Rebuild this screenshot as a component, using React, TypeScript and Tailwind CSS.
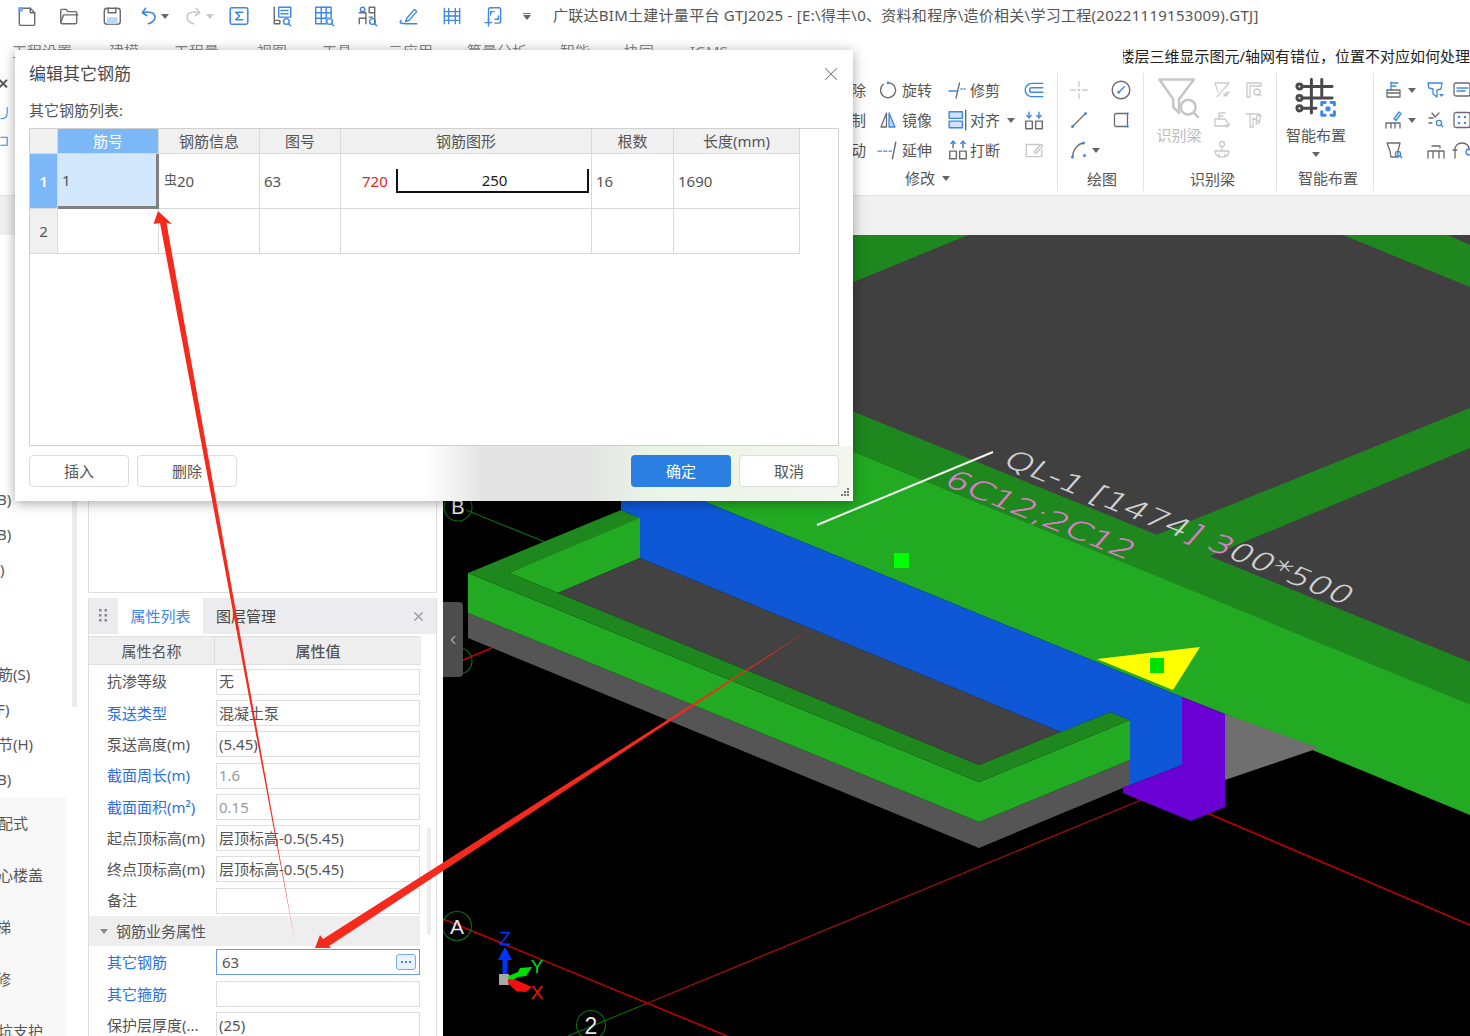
import type { ReactNode } from 'react';
import { ChevronLeft, X } from 'lucide-react';

const BLUE = '#3c87e8';
const GRAY = '#6b6b6b';
const DIM = '#c9c9c9';

const Ico = ({ size = 20, box = 20, children }: { size?: number; box?: number; children: ReactNode }) => (
  <svg width={size} height={size} viewBox={`0 0 ${box} ${box}`} fill="none" stroke={GRAY} strokeWidth={1.3} strokeLinecap="round" strokeLinejoin="round" className="shrink-0">
    {children}
  </svg>
);

const Caret = ({ color = '#666' }: { color?: string }) => (
  <svg width="8" height="5" viewBox="0 0 8 5" className="shrink-0"><path d="M0 0h8L4 5z" fill={color} /></svg>
);

const Mag = ({ x, y, c = BLUE }: { x: number; y: number; c?: string }) => (
  <g stroke={c}>
    <circle cx={x} cy={y} r="2.6" />
    <path d={`M${x + 2} ${y + 2}l1.8 1.8`} />
  </g>
);

/* quick access toolbar */
const topIcons = [
  { ml: 'ml-[16px]', el: <Ico size={22}><path d="M4 3h9l4 4v10.5a1 1 0 0 1-1 1H4a1 1 0 0 1-1-1V4" /><path d="M13 3v4h4" /><path d="M2 2h4v4H2z" fill="#6aa6ee" stroke="none" /></Ico> },
  { ml: 'ml-[20px]', el: <Ico size={22}><path d="M2.5 16V5a1 1 0 0 1 1-1h4l1.5 2h7a1 1 0 0 1 1 1v9a1 1 0 0 1-1 1h-12.500a1 1 0 0 1-1-1z" /><path d="M2.500 16l2.500-7h13" /></Ico> },
  { ml: 'ml-[21px]', el: <Ico size={22}><rect x="3" y="3" width="14.500" height="14.500" rx="2.500" /><path d="M6.500 3v4h7V3" /><path d="M5.500 11h9.500v6.500h-9.500z" fill="#b9d6f7" stroke="none" /></Ico> },
  { ml: 'ml-[16px]', el: <Ico size={22}><g stroke={BLUE} strokeWidth="1.500"><path d="M6 3L3 7l4 2.500" /><path d="M3.500 7c5-1.500 11-.5 11 4 0 3-3 5.500-6 6" /></g></Ico> },
  { ml: '', el: <Caret /> },
  { ml: 'ml-[12px]', el: <Ico size={22}><g stroke={DIM} strokeWidth="1.500"><path d="M14 3l3 4-4 2.500" /><path d="M16.500 7c-5-1.500-11-.5-11 4 0 3 3 5.500 6 6" /></g></Ico> },
  { ml: 'ml-[3px]', el: <Caret color={DIM} /> },
  { ml: 'ml-[14px]', el: <Ico size={22}><g stroke={BLUE} strokeWidth="1.400"><rect x="2" y="2.500" width="16" height="15" rx="1.500" /><path d="M13.500 6.500H7l3.500 3.500L7 13.500h6.500" /></g></Ico> },
  { ml: 'ml-[21px]', el: <Ico size={22}><path d="M3 2v15h5v-3H3" /><path d="M7 2h11v9H7z" stroke={BLUE} /><path d="M9 5h7M9 8h7" stroke={BLUE} strokeDasharray="1.500 1" /><Mag x={14} y={15} /></Ico> },
  { ml: 'ml-[20px]', el: <Ico size={22}><g stroke={BLUE}><rect x="2.500" y="2" width="14" height="15" /><path d="M7.500 2v15M12 2v15M2.500 7h14M2.500 12h14" /></g><circle cx="15" cy="15" r="3.500" fill="#fff" stroke="none" /><Mag x={15} y={15} /></Ico> },
  { ml: 'ml-[21px]', el: <Ico size={22}><g stroke={GRAY}><path d="M3 7h6v10M3 12h6M3 12v5" /><path d="M12 2h5v15M12 2v5h5M12 11h3" /></g><circle cx="6" cy="4" r="2" stroke={BLUE} /><Mag x={15} y={15} /></Ico> },
  { ml: 'ml-[20px]', el: <Ico size={22}><path d="M8 12l7-8 2 2-7 8-3 1z" stroke={BLUE} /><path d="M3 14c-3 3 1 3 5 3h9" stroke={BLUE} /></Ico> },
  { ml: 'ml-[21px]', el: <Ico size={22}><g stroke={BLUE}><path d="M3 3v14M17 3v14M7 3v14M13 3v14M3 6h14M3 10h14M3 14h14" strokeWidth="1.200" /></g></Ico> },
  { ml: 'ml-[20px]', el: <Ico size={22}><g stroke={BLUE}><path d="M5 15V4a1.500 1.500 0 0 1 1.500-1.500h8A1.500 1.500 0 0 1 16 4v11a1.500 1.500 0 0 1-1.500 1.500H11" /><path d="M7 6h3M7 6v3M14 13h-3M14 13v-3" /><path d="M5 13v6M2 16h6" /></g></Ico> },
];

const menus = ['工程设置', '建模', '工程量', '视图', '工具', '云应用', '算量分析', '智能', '协同', 'IGMS'];
const menuWidths = ['w-[97px]', 'w-[65px]', 'w-[83px]', 'w-[65px]', 'w-[66px]', 'w-[79px]', 'w-[93px]', 'w-[64px]', 'w-[66px]', 'w-[60px]'];

/* ribbon icons */
const rotate = <Ico><path d="M11 2.800a7.500 7.500 0 1 1-5.500 1.500" /><circle cx="10" cy="2.800" r="1.400" fill={BLUE} stroke="none" /></Ico>;
const trim = <Ico><path d="M1 11h8" stroke={BLUE} /><path d="M11.500 3L8 18" /><path d="M13 9h1M16 9h1" stroke={BLUE} /></Ico>;
const offset = <Ico size={22}><g stroke={BLUE}><path d="M18 4H8a6 6 0 0 0 0 12h10" /><path d="M18 8H8a2 2 0 0 0 0 4h10" /></g></Ico>;
const mirror = <Ico><path d="M8.500 3L3 17h5.500z" /><path d="M11 3l6 14h-6z" fill="#b9d6f7" stroke={BLUE} /></Ico>;
const align = <Ico size={22}><rect x="2" y="2.500" width="12" height="6" stroke={BLUE} fill="#cfe2fa" /><rect x="2" y="11" width="12" height="6" stroke={BLUE} fill="#cfe2fa" /><path d="M17 1v18" /></Ico>;
const breakBox = <Ico size={22}><rect x="2.500" y="11" width="6" height="7" /><rect x="11.500" y="11" width="6" height="7" /><path d="M5.500 2v6M14.500 2v6" /><path d="M3.500 4l2-2 2 2M12.500 4l2-2 2 2" stroke={BLUE} /></Ico>;
const breakAlt = <Ico size={22}><rect x="2.500" y="11" width="6" height="7" /><rect x="11.500" y="11" width="6" height="7" /><path d="M5.500 3v5M14.500 3v5" stroke={BLUE} /><path d="M3.500 6l2 2 2-2M12.500 6l2 2 2-2" stroke={BLUE} /></Ico>;
const extend = <Ico size={22}><path d="M1 11h3M6 11h3M11 11h2" stroke={BLUE} /><path d="M17 3l-3 15" /></Ico>;
const editOff = <Ico size={22}><path d="M15 5H3v11h14v-6" stroke={DIM} /><path d="M10 12l6-7 2 1-6 7z" stroke={DIM} /></Ico>;

const cross = <Ico><path d="M10 1.500v5M10 13.500v5M1.500 10h5M13.500 10h5" stroke={DIM} /><circle cx="10" cy="10" r="1.300" fill={DIM} stroke="none" /></Ico>;
const gauge = <Ico size={22}><circle cx="10" cy="10" r="8" /><path d="M8 12l5-5" stroke={BLUE} /><circle cx="8" cy="12" r="1.300" fill={BLUE} stroke="none" /></Ico>;
const line = <Ico><path d="M4 16L16 4" /><circle cx="3.500" cy="16.500" r="1.500" fill={BLUE} stroke="none" /><circle cx="16.500" cy="3.500" r="1.500" fill={BLUE} stroke="none" /></Ico>;
const rectI = <Ico><rect x="3.500" y="3.500" width="13" height="13" rx="1.500" /><circle cx="16.500" cy="3.500" r="1.200" fill={BLUE} stroke="none" /><circle cx="16.500" cy="16.500" r="1.200" fill={BLUE} stroke="none" /></Ico>;
const arc = <Ico><path d="M3.500 17C4 9 9 4 14 3" /><circle cx="3.500" cy="17" r="1.500" fill={BLUE} stroke="none" /><circle cx="14.500" cy="3" r="1.500" fill={BLUE} stroke="none" /><circle cx="15.500" cy="15.500" r="1.500" fill={BLUE} stroke="none" /></Ico>;

const dimA = <Ico><g stroke={DIM}><path d="M3 3h14L5 17M3 3l3 9M15 12l-3 4" strokeDasharray="2 1" /><path d="M12 14l2 2 3-4" /></g></Ico>;
const dimB = <Ico><g stroke={DIM}><path d="M3 3h14v3H6v11H3z" /><circle cx="13" cy="12" r="3" /><path d="M15 14l2 2" /></g></Ico>;
const dimC = <Ico><g stroke={DIM}><path d="M3 9h10l3 4v3H3zM7 9V3M7 3h6M7 6h4" /><path d="M13 15l2 2 3-3" /></g></Ico>;
const dimD = <Ico><g stroke={DIM}><path d="M2 4h13M6 4v13h3V8l7 4" /><path d="M13 6l4-1-2 8-3 1z" /></g></Ico>;
const dimE = <Ico><g stroke={DIM}><circle cx="10" cy="4" r="2.500" /><path d="M10 7v4M3 11h14M3 11c0 4 2 6 7 6s7-2 7-6M7 14v3M13 14v3" /></g></Ico>;

const funnel = (
  <Ico size={46}>
    <g stroke="#c6c6c6" strokeWidth="1.100">
      <path d="M1.500 2H16.500L10 10.500V16.500L7.500 14V10.500z" />
      <circle cx="14" cy="14" r="3.200" />
      <path d="M16.300 16.300l2 2" />
    </g>
  </Ico>
);
const smart = (
  <Ico size={46}>
    <g stroke="#4a4a4a" strokeWidth="1.300">
      <path d="M4 5h13M4 10h13M4 14.500h6M8 2v14.500M12.500 2v7" />
      <circle cx="2.800" cy="5" r="1.100" />
      <circle cx="2.800" cy="10" r="1.100" />
      <circle cx="2.800" cy="14.500" r="1.100" />
    </g>
    <g stroke={BLUE} strokeWidth="1.300">
      <path d="M12.500 13v-1h1.500M16.500 12H18v1M18 16v1.500h-1.500M14 17.500h-1.500V16" />
      <circle cx="15.200" cy="14.700" r=".5" fill={BLUE} />
    </g>
  </Ico>
);

const lastIcons = [
  <Ico key="a"><path d="M7 2v8M7 3h7M7 6h5" stroke={BLUE} /><path d="M3 10h13v7H3zM3 13h13" /></Ico>,
  <Ico key="b"><path d="M2 3h14l-1 6-4 1v7l-4-3V9L3 8z" stroke={BLUE} /><path d="M13 14h5l-2.500 3z" fill={BLUE} stroke="none" /></Ico>,
  <Ico key="c"><rect x="2" y="3" width="16" height="13" rx="2" /><path d="M5 8h11M5 11h8" stroke={BLUE} /></Ico>,
  <Ico key="d"><path d="M10 9l5-7 2 1.500-5 7z" stroke={BLUE} /><path d="M2 18v-5h14v5M7 13v5M11 13v5" /></Ico>,
  <Ico key="e"><path d="M3 8h4M13 3L9 7M6 3l3 4M3 13h3" /><Mag x={13} y={13} /></Ico>,
  <Ico key="f"><rect x="2" y="2.500" width="16" height="15" rx="2" /><g fill={BLUE} stroke="none"><circle cx="7" cy="7" r="1.200" /><circle cx="13" cy="7" r="1.200" /><circle cx="7" cy="13" r="1.200" /><circle cx="13" cy="13" r="1.200" /></g></Ico>,
  <Ico key="g"><path d="M3 3h13l-2 8v6H7l-1-6z" /><Mag x={14} y={14} /></Ico>,
  <Ico key="h"><path d="M3 11h14M2 18v-7M18 18v-7M7 11v7M13 11v7M6 6h8v2" /></Ico>,
  <Ico key="i"><path d="M3 10C3 5 6 3 10 3s7 2 7 7" /><path d="M3 10v8M1 10h4" /><circle cx="17" cy="12" r="3" stroke={BLUE} /></Ico>,
];

const Tool = ({ icon, label, pl, gap, caret }: { icon: ReactNode; label: string; pl: string; gap: string; caret?: boolean }) => (
  <div className={`flex items-center ${pl} ${gap}`}>
    {icon}
    <span className="whitespace-nowrap">{label}</span>
    {caret && <span className="ml-[6px]"><Caret /></span>}
  </div>
);

/* left tree stub, clipped by the window edge */
const SideRow = ({ text, ml, h = 'h-[35px]' }: { text: string; ml: string; h?: string }) => (
  <div className={`${h} flex items-center whitespace-nowrap ${ml}`}>{text}</div>
);

const propRows = [
  { k: '抗渗等级', v: '无' },
  { k: '泵送类型', v: '混凝土泵', link: true },
  { k: '泵送高度(m)', v: '(5.45)' },
  { k: '截面周长(m)', v: '1.6', link: true, mute: true },
  { k: '截面面积(m²)', v: '0.15', link: true, mute: true },
  { k: '起点顶标高(m)', v: '层顶标高-0.5(5.45)' },
  { k: '终点顶标高(m)', v: '层顶标高-0.5(5.45)' },
  { k: '备注', v: '' },
];

const PropRow = ({ k, v, link, mute }: { k: string; v: string; link?: boolean; mute?: boolean }) => (
  <div className="grid h-[31.300px] grid-cols-[127px_204px] items-center">
    <div className={`whitespace-nowrap pl-[18px] ${link ? 'text-[#2f6fe0]' : ''}`}>{k}</div>
    <div className={`flex h-[26px] items-center border border-[#dedede] px-[2px] ${mute ? 'text-[#9a9a9a]' : ''}`}>{v}</div>
  </div>
);

const Scene = () => (
  <svg viewBox="443 235 1027 801" className="block h-full w-full" shapeRendering="geometricPrecision">
    <rect x="443" y="235" width="1027" height="801" fill="#000" />
    {/* axis lines */}
    <path d="M443 919L727 1036M1207 813L1470 925M463 660L492 648" stroke="#c40000" strokeWidth="1.500" />
    <path d="M1141 800L643 1005" stroke="#a01010" strokeWidth="1.300" />
    <path d="M643 1005L568 1036M466 510L545 542" stroke="#0a6a0a" strokeWidth="1.200" />
    {/* upper floor */}
    <path d="M640 235H1470V670L853 412L640 330z" fill="#404040" />
    <path d="M640 235H968L640 370z" fill="#1e871e" />
    <path d="M1343 235H1448L1470 245V287z" fill="#1e871e" />
    <path d="M1156 535L1470 408V448L1208 557z" fill="#1e871e" />
    <path d="M640 325L1470 662V705L640 364z" fill="#1e871e" />
    <path d="M640 364L1470 704.500V815L1225 714L1182 697L703 501H640z" fill="#22aa22" />
    {/* lower slab */}
    <path d="M1225 714L1319 748L1225 780z" fill="#6f6f6f" />
    <path d="M468 613V638L979 848L1130 785V760L979 822z" fill="#555" />
    <path d="M468 573L979 782L1130 720V760L979 822L468 613z" fill="#22aa22" />
    <path d="M509 573L640 515V558L558 593z" fill="#22aa22" />
    <path d="M558 593L640 558L1061 732L979 765z" fill="#424242" />
    <path d="M468 573L621 510L640 518L509 573L558 593L979 765L1110 712L1130 720L979 782z" fill="#1e871e" />
    <path d="M621 501H703L1182 697V765L1130 785V720L1110 712L1061 732L640 558V518L621 510z" fill="#0e58d8" />
    <path d="M1182 697L1225 714V807L1191 821L1123 793V787L1130 785L1182 765z" fill="#6a00d4" />
    {/* markers */}
    <rect x="894" y="553" width="15" height="15" fill="#00ff00" />
    <path d="M1097 659L1200 647L1173 690z" fill="#ffff00" />
    <rect x="1150" y="658" width="14" height="15" fill="#00e000" />
    <path d="M817 525L993 452" stroke="#f4f4f4" strokeWidth="2" />
    <text transform="matrix(.925 .38 -.82 .94 1001 464)" fontFamily="'DejaVu Sans', sans-serif" fontWeight="200" fontSize="22" fill="#d6d6d6" stroke="#d6d6d6" strokeWidth=".3" textLength="372" lengthAdjust="spacingAndGlyphs">
      QL-1 [1474<tspan fill="#e87ad8" stroke="#e87ad8">] 3</tspan>00*500
    </text>
    <text transform="matrix(.925 .38 -.82 .94 942 484)" fontFamily="'DejaVu Sans', sans-serif" fontWeight="200" fontSize="22" fill="#e87ad8" stroke="#e87ad8" strokeWidth=".3" textLength="200" lengthAdjust="spacingAndGlyphs">
      6C12;2C12
    </text>
    {/* grid bubbles */}
    <g fill="none" stroke="#0b6a0b" strokeWidth="1.200">
      <circle cx="457" cy="926" r="14.500" />
      <circle cx="591" cy="1025" r="14.500" />
      <circle cx="458" cy="507" r="14" />
      <circle cx="459" cy="661" r="13" />
    </g>
    <g fontFamily="'Liberation Sans', sans-serif" fill="#e6e6e6" textAnchor="middle">
      <text x="457" y="934" fontSize="21">A</text>
      <text x="591" y="1034" fontSize="23">2</text>
      <text x="458" y="514" fontSize="20">B</text>
    </g>
    {/* axis gizmo */}
    <path d="M498 960L505 947L512 960H507.500V975H502.500V960z" fill="#0033ff" />
    <rect x="499" y="974" width="10" height="11" fill="#a8a8a8" />
    <path d="M508 976L518 972L520 968L532 967L526 976L518 977L510 982z" fill="#00e000" />
    <path d="M508 979L516 980L532 987L526 992L516 991L508 983z" fill="#f01010" />
    <g fontFamily="'Liberation Sans', sans-serif" fontSize="19" textAnchor="middle">
      <text x="505" y="945" fill="#0033ff">Z</text>
      <text x="537" y="973" fill="#00e000">Y</text>
      <text x="537" y="999" fill="#f01010">X</text>
    </g>
  </svg>
);

const headCell = 'flex items-center justify-center border-r border-b border-[#d9d9d9] bg-[#f0f0f0]';
const bodyCell = 'flex items-center border-r border-b border-[#d9d9d9]';

const Dialog = () => (
  <div className="absolute left-[15px] top-[50px] flex h-[451px] w-[838px] flex-col bg-white text-[#555] shadow-[0_2px_12px_rgba(0,0,0,0.35)]">
    <div className="flex h-[48px] items-center justify-between px-[14px] text-[17px] text-[#4a4a4a]">
      <span>编辑其它钢筋</span>
      <span className="-mr-[3px]"><X size={22} strokeWidth={1.100} color="#777" /></span>
    </div>
    <div className="flex h-[24px] items-center px-[14px]">其它钢筋列表:</div>
    <div className="mx-[14px] mt-[6px] h-[318px] border border-[#cfcfcf] bg-white">
      <div className="grid w-[770px] grid-cols-[28px_101px_101px_81px_251px_82px_126px] grid-rows-[25px_55px_45px]">
        <div className={headCell} />
        <div className="flex items-center justify-center border-r border-b border-[#d9d9d9] bg-[#7cb8f8] text-white">筋号</div>
        <div className={headCell}>钢筋信息</div>
        <div className={headCell}>图号</div>
        <div className={headCell}>钢筋图形</div>
        <div className={headCell}>根数</div>
        <div className={headCell}>长度(mm)</div>

        <div className="flex items-center justify-center border-b border-r border-[#d9d9d9] bg-[#7cb8f8] font-semibold text-white">1</div>
        <div className="flex items-center border-r-[3px] border-b-[3px] border-[#808080] bg-[#d4e8fd] pl-[4px]">1</div>
        <div className={`${bodyCell} pl-[5px]`}>
          <span className="-mt-[4px] text-[13px] leading-none">虫</span>
          <span>20</span>
        </div>
        <div className={`${bodyCell} pl-[4px]`}>63</div>
        <div className={`${bodyCell} pl-[21px]`}>
          <span className="w-[34px] text-[#f02020]">720</span>
          <div className="flex h-[24px] w-[193px] items-center justify-center rounded-b-[1px] border-x-2 border-b-2 border-[#111] pl-[4px] text-[#222]">250</div>
        </div>
        <div className={`${bodyCell} pl-[4px]`}>16</div>
        <div className={`${bodyCell} pl-[4px]`}>1690</div>

        <div className={headCell}>2</div>
        <div className={bodyCell} />
        <div className={bodyCell} />
        <div className={bodyCell} />
        <div className={bodyCell} />
        <div className={bodyCell} />
        <div className={bodyCell} />
      </div>
    </div>
    <div className="relative flex flex-1 gap-[8px] bg-[linear-gradient(90deg,#fff_49%,#e3e3e3_56%,#e3e3e3_68%,#eaf4e6_76%,#f2f7ef_100%)] px-[14px] pt-[9px]">
      <button className="h-[32px] w-[100px] rounded-[4px] border border-[#dcdcdc] bg-white">插入</button>
      <button className="h-[32px] w-[100px] rounded-[4px] border border-[#dcdcdc] bg-white">删除</button>
      <button className="ml-auto h-[32px] w-[100px] rounded-[4px] bg-[#2b7fe3] text-white">确定</button>
      <button className="h-[32px] w-[100px] rounded-[4px] border border-[#dcdcdc] bg-white">取消</button>
      <svg width="10" height="10" viewBox="0 0 10 10" className="absolute bottom-[4px] right-[3px]" fill="#777">
        <rect x="7" y="1" width="2" height="2" /><rect x="4" y="4" width="2" height="2" /><rect x="7" y="4" width="2" height="2" />
        <rect x="1" y="7" width="2" height="2" /><rect x="4" y="7" width="2" height="2" /><rect x="7" y="7" width="2" height="2" />
      </svg>
    </div>
  </div>
);

export default function App() {
  return (
    <div className="relative flex h-[1036px] w-[1470px] flex-col overflow-hidden bg-white font-['Noto_Sans','Noto_Sans_CJK_SC',sans-serif] text-[15px] text-[#555]">
      {/* title bar */}
      <div className="flex h-[32px] items-center">
        {topIcons.map((t, i) => (
          <div key={i} className={`flex items-center ${t.ml}`}>{t.el}</div>
        ))}
        <span className="ml-[17px] flex w-[10px] flex-col items-center gap-[1px]">
          <span className="h-px w-[8px] bg-[#777]" />
          <Caret />
        </span>
        <span className="-mt-[1px] ml-[21px] whitespace-nowrap tracking-[0.27px]">广联达BIM土建计量平台 GTJ2025 - [E:\得丰\0、资料和程序\造价相关\学习工程(20221119153009).GTJ]</span>
      </div>

      {/* menu row, mostly under the dialog */}
      <div className="flex h-[38px]">
        <div className="flex pl-[12px] pt-[8px] text-[#888] blur-[0.6px]">
          {menus.map((m, i) => (
            <span key={m} className={`whitespace-nowrap ${menuWidths[i]}`}>{m}</span>
          ))}
        </div>
        <div className="ml-auto mt-[14px] flex h-[20px] w-[347px] items-center justify-end overflow-hidden whitespace-nowrap text-[#222]">
          楼层三维显示图元/轴网有错位，位置不对应如何处理
        </div>
      </div>

      {/* ribbon */}
      <div className="flex h-[126px] border-b border-[#e2e2e2]">
        <div className="flex w-[15px] shrink-0 flex-col gap-[12px] pt-[8px]">
          <Ico size={16}><path d="M0 3l8 8M8 3L0 11" stroke="#555" strokeWidth="2.500" /></Ico>
          <Ico size={16}><path d="M1 16c6 0 8-3 8-8V2" stroke={BLUE} /></Ico>
          <Ico size={16}><path d="M1 4h8v10H1" stroke={BLUE} /></Ico>
        </div>
        <div className="mt-[3px] flex h-[118px] w-[1042px] shrink-0 flex-col items-end pr-[12px] pt-[2px]">
          <div className="grid w-[207px] grid-cols-[36px_68px_76px_27px] grid-rows-[30px_30px_30px] items-center">
            <div className="flex justify-end whitespace-nowrap pr-[8px]">删除</div>
            <Tool icon={rotate} label="旋转" pl="pl-[4px]" gap="gap-[4px]" />
            <Tool icon={trim} label="修剪" pl="pl-[6px]" gap="gap-[2px]" />
            <div className="pl-[5px]">{offset}</div>
            <div className="flex justify-end whitespace-nowrap pr-[8px]">复制</div>
            <Tool icon={mirror} label="镜像" pl="pl-[4px]" gap="gap-[4px]" />
            <Tool icon={align} label="对齐" pl="pl-[5px]" gap="gap-[1px]" caret />
            <div className="pl-[5px]">{breakAlt}</div>
            <div className="flex justify-end whitespace-nowrap pr-[8px]">移动</div>
            <Tool icon={extend} label="延伸" pl="pl-[3px]" gap="gap-[3px]" />
            <Tool icon={breakBox} label="打断" pl="pl-[5px]" gap="gap-[1px]" />
            <div className="pl-[5px]">{editOff}</div>
          </div>
          <div className="flex h-[26px] w-[207px] items-center gap-[7px] pl-[67px]">
            修改 <Caret />
          </div>
        </div>

        <div className="mt-[3px] flex h-[118px] w-[86px] shrink-0 flex-col border-l border-[#e2e2e2] pt-[2px]">
          <div className="grid grid-cols-[42px_42px] grid-rows-[30px_30px_30px] place-items-center">
            {cross}
            {gauge}
            {line}
            {rectI}
            <div className="flex items-center gap-[3px] pl-[11px]">{arc}<Caret /></div>
          </div>
          <div className="mt-[2px] flex h-[26px] items-center justify-center pl-[3px]">绘图</div>
        </div>

        <div className="mt-[3px] flex h-[118px] w-[133px] shrink-0 flex-col border-l border-[#e2e2e2] pt-[2px]">
          <div className="flex h-[90px]">
            <div className="flex w-[70px] flex-col items-center">
              {funnel}
              <span className="mt-[3px] text-[#bcbcbc]">识别梁</span>
            </div>
            <div className="-ml-[8px] grid grid-cols-[32px_32px] grid-rows-[30px_30px_30px] place-items-center">
              {dimA}
              {dimB}
              {dimC}
              {dimD}
              {dimE}
            </div>
          </div>
          <div className="mt-[2px] flex h-[26px] items-center justify-center pl-[5px]">识别梁</div>
        </div>

        <div className="mt-[3px] flex h-[118px] w-[97px] shrink-0 flex-col border-l border-[#e2e2e2] pt-[2px]">
          <div className="flex h-[90px] w-[78px] flex-col items-center">
            {smart}
            <span className="mt-[3px] whitespace-nowrap">智能布置</span>
            <span className="mt-[5px]"><Caret /></span>
          </div>
          <div className="mt-[2px] flex h-[26px] items-center justify-center pl-[6px]">智能布置</div>
        </div>

        <div className="mt-[3px] h-[118px] flex-1 border-l border-[#e2e2e2] pt-[2px]">
          <div className="grid grid-cols-[42px_34px_30px] grid-rows-[30px_30px_30px] items-center">
            {lastIcons.map((ic, i) => (
              <div key={i} className={`flex items-center gap-[4px] ${i % 3 === 0 ? 'pl-[10px]' : i % 3 === 1 ? 'pl-[10px]' : 'pl-[2px]'}`}>
                {ic}
                {i % 3 === 0 && i < 6 && <Caret />}
              </div>
            ))}
          </div>
        </div>
      </div>

      <div className="h-[39px] bg-[#f0f0f0]" />

      {/* body */}
      <div className="flex min-h-0 flex-1">
        {/* tree stub */}
        <div className="flex w-[88px] shrink-0 overflow-hidden">
          <div className="w-[72px] shrink-0 overflow-hidden">
            <div className="h-[247px]" />
            <SideRow text="B)" ml="-ml-[3px]" />
            <SideRow text="B)" ml="-ml-[3px]" />
            <SideRow text=")" ml="ml-0" />
            <div className="h-[70px]" />
            <SideRow text="筋(S)" ml="-ml-[2px]" />
            <SideRow text="F)" ml="-ml-[3px]" />
            <SideRow text="节(H)" ml="-ml-[2px]" />
            <SideRow text="B)" ml="-ml-[3px]" />
            <div className="mr-[6px] bg-[#f8f8f8]">
              <SideRow text="配式" ml="-ml-[2px]" h="h-[52px]" />
              <SideRow text="心楼盖" ml="-ml-[2px]" h="h-[52px]" />
              <SideRow text="梯" ml="-ml-[4px]" h="h-[52px]" />
              <SideRow text="修" ml="-ml-[4px]" h="h-[52px]" />
              <SideRow text="坑支护" ml="-ml-[2px]" h="h-[52px]" />
            </div>
          </div>
          <div className="mt-[250px] h-[222px] w-[5px] shrink-0 bg-[#ececec]" />
        </div>

        {/* middle column */}
        <div className="flex w-[355px] shrink-0 flex-col gap-[5px] pr-[6px]">
          <div className="h-[358px] border border-t-0 border-[#dedede]" />
          <div className="relative min-h-0 flex-1 overflow-hidden border-x border-[#dedede]">
            <div className="flex h-[36px] items-center bg-[#ececee]">
              <span className="flex w-[29px] justify-center">
                <svg width="9" height="17" viewBox="0 0 9 17" fill="#888">
                  <rect y="1" width="2.500" height="2.500" /><rect x="5.500" y="1" width="2.500" height="2.500" />
                  <rect y="6" width="2.500" height="2.500" /><rect x="5.500" y="6" width="2.500" height="2.500" />
                  <rect y="11" width="2.500" height="2.500" /><rect x="5.500" y="11" width="2.500" height="2.500" />
                </svg>
              </span>
              <span className="flex h-full w-[85px] items-center justify-center bg-white text-[#3c87e8]">属性列表</span>
              <span className="ml-[13px] text-[#444]">图层管理</span>
              <span className="ml-auto pr-[10px]"><X size={15} color="#999" /></span>
            </div>
            <div className="mt-[2px] grid h-[29px] w-[332px] grid-cols-[126px_206px] border-y border-[#e0e0e0] bg-[#eeeeee]">
              <div className="flex items-center justify-center border-r border-[#dcdcdc] pt-[2px]">属性名称</div>
              <div className="flex items-center justify-center pt-[2px] font-medium">属性值</div>
            </div>
            <div className="mt-[1px]">
              {propRows.map((r) => (
                <PropRow key={r.k} k={r.k} v={r.v} link={r.link} mute={r.mute} />
              ))}
            </div>
            <div className="flex h-[30px] w-[331px] items-center gap-[8px] bg-[#eeeeee] pl-[11px]">
              <Caret color="#888" />
              钢筋业务属性
            </div>
            <div className="grid h-[32px] grid-cols-[127px_204px] items-center">
              <div className="pl-[18px] text-[#2f6fe0]">其它钢筋</div>
              <div className="flex h-[26px] items-center justify-between border border-[#6f9be3] pl-[5px] pr-[3px]">
                63
                <span className="flex h-[16px] w-[20px] items-center justify-center gap-[2px] rounded-[3px] border border-[#7aa9e8] bg-[#eaf3fd]">
                  <i className="h-[2px] w-[2px] bg-[#4a86d8]" />
                  <i className="h-[2px] w-[2px] bg-[#4a86d8]" />
                  <i className="h-[2px] w-[2px] bg-[#4a86d8]" />
                </span>
              </div>
            </div>
            <PropRow k="其它箍筋" v="" link />
            <PropRow k="保护层厚度(..." v="(25)" />
            <div className="absolute left-[338px] top-[230px] h-[107px] w-[4px] rounded bg-[#ececec]" />
          </div>
        </div>

        {/* canvas */}
        <div className="relative min-w-0 flex-1">
          <Scene />
          <div className="absolute left-0 top-[367px] flex h-[75px] w-[20px] items-center justify-center rounded-r-[4px] bg-[#4d4d4d]">
            <ChevronLeft size={14} color="#aaa" />
          </div>
        </div>
      </div>

      <Dialog />

      {/* red hand-drawn arrows on top of everything */}
      <svg width="1470" height="1036" viewBox="0 0 1470 1036" className="pointer-events-none absolute left-0 top-0">
        <path d="M158 211L172 224L166.500 223L295 942L160 223L153.500 224z" fill="#f5291c" />
        <path d="M315 948L320 935L323 939L812 628L329 946L331 948z" fill="#f5291c" />
      </svg>
    </div>
  );
}
